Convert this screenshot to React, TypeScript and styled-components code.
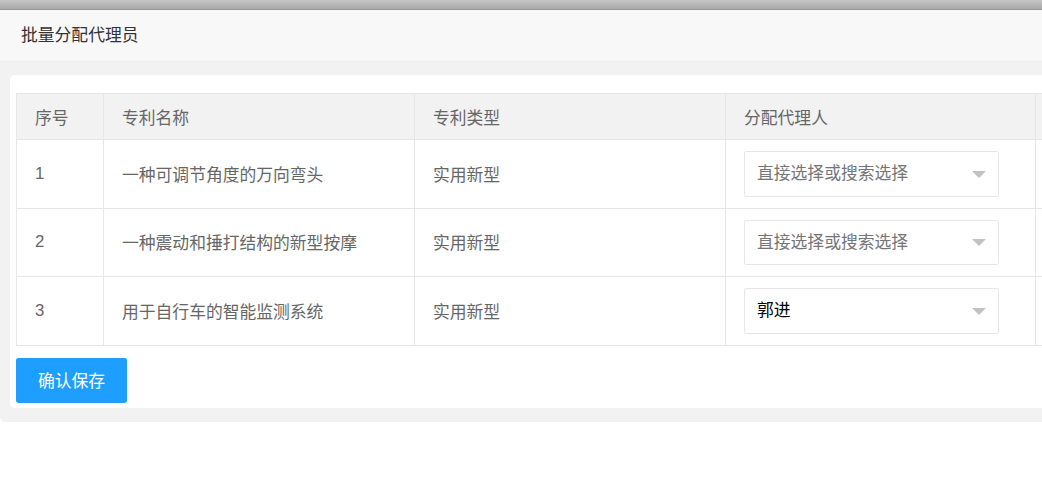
import React from "react";
import styled, { createGlobalStyle } from "styled-components";

const GlobalStyle = createGlobalStyle`
  html, body {
    margin: 0;
    padding: 0;
    background: #fff;
    overflow: hidden;
  }
  body {
    font-family: "Liberation Sans", "Noto Sans CJK SC", sans-serif;
    font-size: 16.8px;
    color: #666;
  }
`;

const TopBar = styled.div`
  height: 9px;
  background: linear-gradient(#c6c6c6, #a9a9a9);
  border-bottom: 1px solid #999;
`;

const Frame = styled.div`
  background: #f2f2f2;
  border-radius: 0 0 5px 5px;
  width: 1400px;
`;

const PanelHeader = styled.div`
  height: 51px;
  line-height: 51px;
  padding-left: 21px;
  background: #f8f8f8;
  border-bottom: 1px solid #eee;
  color: #333;
  font-size: 16.8px;
`;

const PanelBody = styled.div`
  padding: 13px 0 14px 10px;
`;

const Card = styled.div`
  background: #fff;
  border-radius: 5px;
  padding: 18px 6px 5px 6px;
`;

const Table = styled.table`
  border-collapse: collapse;
  table-layout: fixed;
  width: 1300px;
`;

const HeadCell = styled.th`
  height: 46px;
  padding: 0 18px;
  background: #f2f2f2;
  border: 1px solid #e6e6e6;
  text-align: left;
  font-weight: normal;
  color: #666;
  box-sizing: border-box;
`;

const Cell = styled.td`
  height: 68.6px;
  padding: 0 18px;
  border: 1px solid #e6e6e6;
  color: #666;
  box-sizing: border-box;
`;

const Select = styled.div<{ $filled?: boolean }>`
  position: relative;
  box-sizing: border-box;
  width: 255px;
  height: 45.6px;
  line-height: 43.6px;
  padding: 0 36px 0 12px;
  border: 1px solid #e6e6e6;
  border-radius: 2.4px;
  background: #fff;
  color: ${(p) => (p.$filled ? "#000" : "#757575")};
  white-space: nowrap;

  &::after {
    content: "";
    position: absolute;
    right: 12px;
    top: 50%;
    margin-top: -3px;
    border-style: solid;
    border-width: 7.2px 7.2px 0 7.2px;
    border-color: #c2c2c2 transparent transparent transparent;
  }
`;

const SaveButton = styled.button`
  margin-top: 12px;
  height: 45px;
  padding: 0 22px;
  border: none;
  border-radius: 2.4px;
  background: #1e9fff;
  color: #fff;
  font-family: "Liberation Sans", "Noto Sans CJK SC", sans-serif;
  font-size: 16.8px;
  cursor: pointer;
  display: block;
`;

const rows = [
  { no: 1, name: "一种可调节角度的万向弯头", type: "实用新型", agent: "" },
  { no: 2, name: "一种震动和捶打结构的新型按摩", type: "实用新型", agent: "" },
  { no: 3, name: "用于自行车的智能监测系统", type: "实用新型", agent: "郭进" },
];

export default function App() {
  return (
    <>
      <GlobalStyle />
      <TopBar />
      <Frame>
        <PanelHeader>批量分配代理员</PanelHeader>
        <PanelBody>
          <Card>
            <Table>
              <colgroup>
                <col style={{ width: 87 }} />
                <col style={{ width: 311 }} />
                <col style={{ width: 311 }} />
                <col style={{ width: 310 }} />
                <col style={{ width: 281 }} />
              </colgroup>
              <thead>
                <tr>
                  <HeadCell>序号</HeadCell>
                  <HeadCell>专利名称</HeadCell>
                  <HeadCell>专利类型</HeadCell>
                  <HeadCell>分配代理人</HeadCell>
                  <HeadCell />
                </tr>
              </thead>
              <tbody>
                {rows.map((r) => (
                  <tr key={r.no}>
                    <Cell>{r.no}</Cell>
                    <Cell>{r.name}</Cell>
                    <Cell>{r.type}</Cell>
                    <Cell>
                      <Select $filled={!!r.agent}>
                        {r.agent || "直接选择或搜索选择"}
                      </Select>
                    </Cell>
                    <Cell />
                  </tr>
                ))}
              </tbody>
            </Table>
            <SaveButton>确认保存</SaveButton>
          </Card>
        </PanelBody>
      </Frame>
    </>
  );
}
